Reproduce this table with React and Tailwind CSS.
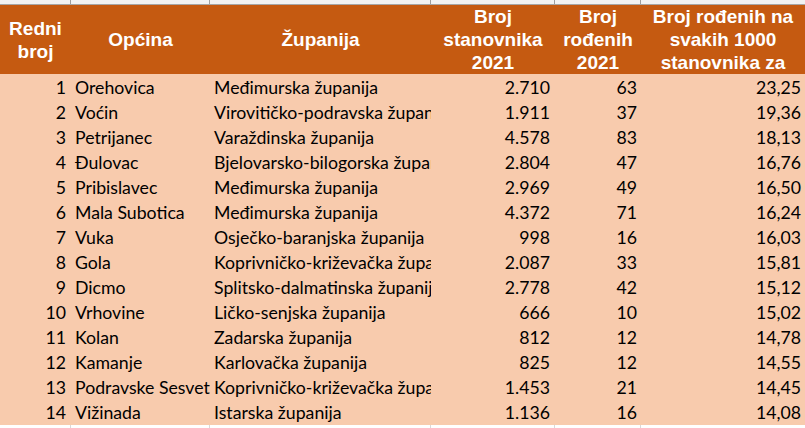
import React from "react";

const rows = [
  [1, "Orehovica", "Međimurska županija", "2.710", "63", "23,25"],
  [2, "Voćin", "Virovitičko-podravska županija", "1.911", "37", "19,36"],
  [3, "Petrijanec", "Varaždinska županija", "4.578", "83", "18,13"],
  [4, "Đulovac", "Bjelovarsko-bilogorska županija", "2.804", "47", "16,76"],
  [5, "Pribislavec", "Međimurska županija", "2.969", "49", "16,50"],
  [6, "Mala Subotica", "Međimurska županija", "4.372", "71", "16,24"],
  [7, "Vuka", "Osječko-baranjska županija", "998", "16", "16,03"],
  [8, "Gola", "Koprivničko-križevačka županija", "2.087", "33", "15,81"],
  [9, "Dicmo", "Splitsko-dalmatinska županija", "2.778", "42", "15,12"],
  [10, "Vrhovine", "Ličko-senjska županija", "666", "10", "15,02"],
  [11, "Kolan", "Zadarska županija", "812", "12", "14,78"],
  [12, "Kamanje", "Karlovačka županija", "825", "12", "14,55"],
  [13, "Podravske Sesvete", "Koprivničko-križevačka županija", "1.453", "21", "14,45"],
  [14, "Vižinada", "Istarska županija", "1.136", "16", "14,08"],
];

const cols = "grid grid-cols-[71px_139px_221px_124px_86px_164px]";

function Strip({ top }) {
  return (
    <div className={`${cols} ${top ? "h-[5px] bg-[#f2f2f2] border-b border-[#a6a6a6]" : "h-[4px] bg-white"}`}>
      {[0, 1, 2, 3, 4, 5].map((i) => (
        <div key={i} className={i < 5 ? (top ? "border-r border-[#9e9e9e]" : "border-r border-[#d9d9d9]") : ""} />
      ))}
    </div>
  );
}

export default function App() {
  return (
    <div className="w-[805px] h-[428px] overflow-hidden bg-white">
      <Strip top />
      <div
        className={`${cols} h-[69px] bg-[#c55a11] text-white font-bold text-[19px] leading-[23px] text-center`}
        style={{ fontFamily: '"Liberation Sans", Arial, sans-serif' }}
      >
        <div className="flex items-center justify-center">Redni<br />broj</div>
        <div className="flex items-center justify-center">Općina</div>
        <div className="flex items-center justify-center">Županija</div>
        <div className="flex items-center justify-center">Broj<br />stanovnika<br />2021</div>
        <div className="flex items-center justify-center">Broj<br />rođenih<br />2021</div>
        <div className="flex items-center justify-center whitespace-nowrap">
          Broj rođenih na<br />svakih 1000<br />stanovnika za
        </div>
      </div>
      <div
        className="bg-[#f8cbad] text-black text-[17.7px]"
        style={{ fontFamily: 'Lato, "Liberation Sans", sans-serif' }}
      >
        {rows.map((r) => (
          <div key={r[0]} className={`${cols} h-[25px] leading-[25px] pt-[1px]`}>
            <div className="text-right pr-[5px]">{r[0]}</div>
            <div className="pl-[4px] whitespace-nowrap overflow-hidden">{r[1]}</div>
            <div className="pl-[4px] whitespace-nowrap overflow-hidden">{r[2]}</div>
            <div className="text-right pr-[5px]">{r[3]}</div>
            <div className="text-right pr-[4px]">{r[4]}</div>
            <div className="text-right pr-[4px]">{r[5]}</div>
          </div>
        ))}
      </div>
      <div className="h-[1px] bg-[#f8cbad]" />
      <Strip />
    </div>
  );
}
